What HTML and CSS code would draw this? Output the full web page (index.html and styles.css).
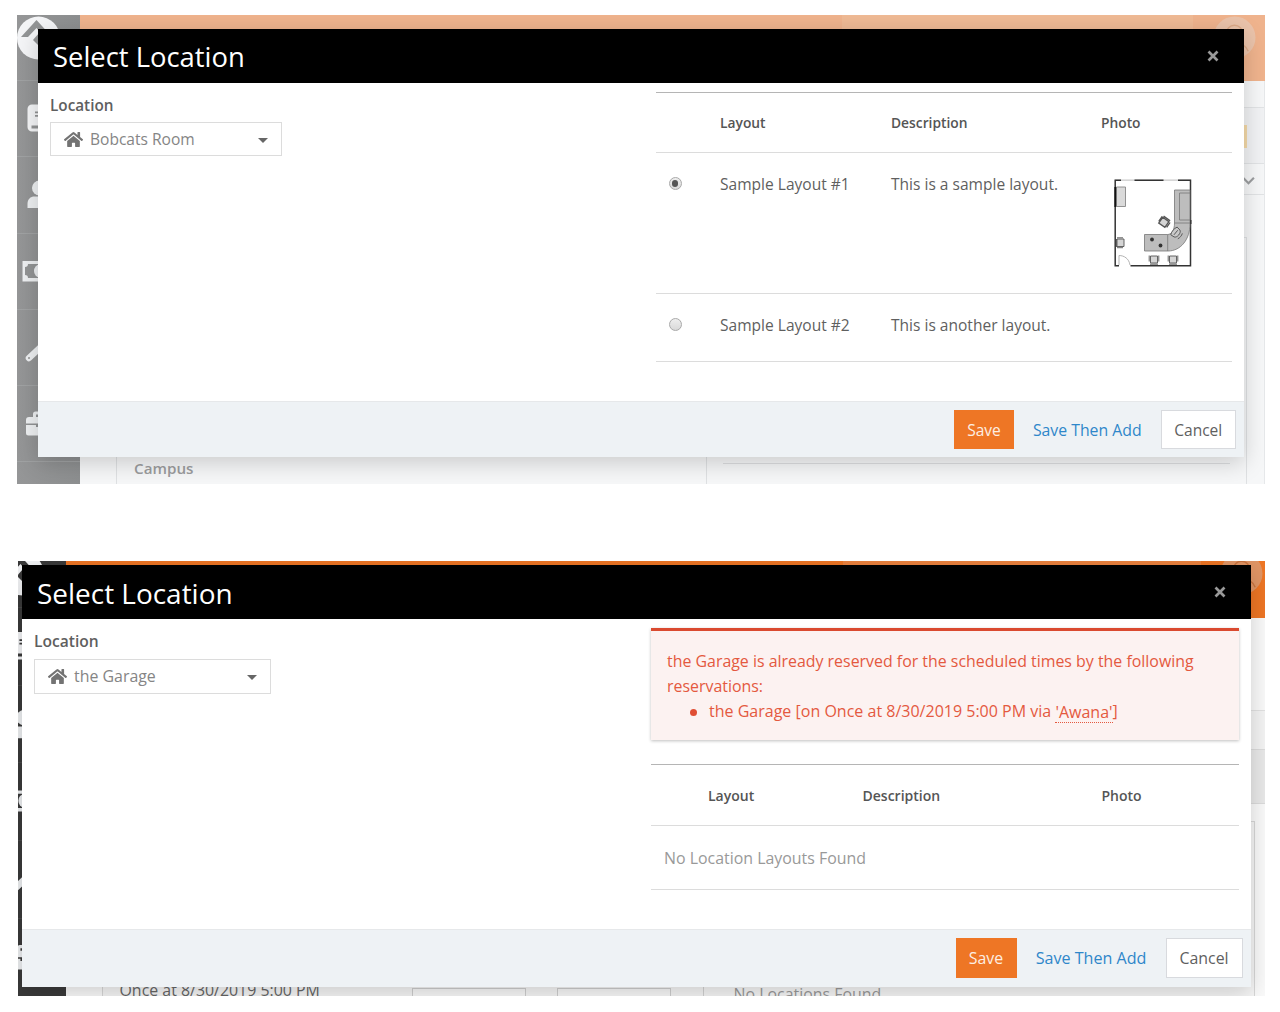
FILE: index.html
```html
<!DOCTYPE html>
<html lang="en">
<head>
<meta charset="utf-8">
<title>Select Location</title>
<link rel="stylesheet" href="styles.css">
</head>
<body>
<svg class="defs" aria-hidden="true">
  <symbol id="i-logo" viewBox="0 0 44 66"><circle cx="21.5" cy="23" r="21.5" fill="#f4f5f7"/><path d="M4 22 19.500 5 35 22h-8l-7.500-9-8.500 9z" class="cut"/><path d="M22 18 16 25l8 8h6z" class="cut"/></symbol>
  <symbol id="i-book" viewBox="0 0 44 76"><path fill="#f4f5f7" d="M15 23.500h20v27H15a4.500 4.500 0 0 1-4.500-4.500V28a4.500 4.500 0 0 1 4.500-4.500z"/><path class="cut" d="M18 30.500h13v1.800H18zM18 34h13v1.800H18zM14.500 44.500h18v3h-18z"/></symbol>
  <symbol id="i-user" viewBox="0 0 44 76"><circle cx="22.500" cy="31" r="7.500" fill="#eef0f2"/><path fill="#eef0f2" d="M10.500 51v-4c0-5 3-7.500 7-7.500h10c4 0 7 2.500 7 7.500v4z"/></symbol>
  <symbol id="i-money" viewBox="0 0 44 76"><path fill="#eef0f2" d="M5.500 27h34v20.500h-34z"/><path class="cut" d="M11 30h23c0 2 1 3 3 3v8c-2 0-3 1-3 3H11c0-2-1-3-3-3v-8c2 0 3-1 3-3z"/><ellipse cx="22.500" cy="37" rx="5.500" ry="6.500" fill="#eef0f2"/><path class="cut" d="M21.500 33.500h2v7h-2z"/></symbol>
  <symbol id="i-wrench" viewBox="0 0 44 76"><path d="M12 48 28 33" stroke="#eef0f2" stroke-width="6.500" stroke-linecap="round"/><circle cx="29" cy="31" r="7" fill="#eef0f2"/><circle cx="12" cy="48" r="1" class="cut"/></symbol>
  <symbol id="i-case" viewBox="0 0 44 76"><path fill="#eef0f2" d="M12 31h4v-3a2.500 2.500 0 0 1 2.500-2.500h8a2.500 2.500 0 0 1 2.500 2.500v3h4a3 3 0 0 1 3 3v13a2.500 2.500 0 0 1-2.500 2.500h-22A2.500 2.500 0 0 1 9 47V34a3 3 0 0 1 3-3z"/><path class="cut" d="M9 37.500h27v1.500H26v2h-7v-2H9zM19 28.500h7V31h-7z"/></symbol>
  <symbol id="i-home" viewBox="0 0 576 512"><path d="M280 149 96 300v164a16 16 0 0 0 16 16l112-.3a16 16 0 0 0 16-16V368a16 16 0 0 1 16-16h64a16 16 0 0 1 16 16v96a16 16 0 0 0 16 16l112 .3a16 16 0 0 0 16-16V300L296 149a12 12 0 0 0-16 0zM572 251l-84-69V44a12 12 0 0 0-12-12h-56a12 12 0 0 0-12 12v73l-90-74a48 48 0 0 0-61 0L4 251a12 12 0 0 0-1 17l25 31a12 12 0 0 0 17 2L280 107a12 12 0 0 1 16 0l235 194a12 12 0 0 0 17-2l25-31a12 12 0 0 0-1-17z"/></symbol>
  <symbol id="i-avatar" viewBox="0 0 44 44"><circle cx="22" cy="22" r="21.500" class="av-bg"/><circle cx="22" cy="18" r="8.500" class="av-line"/><path d="M8 38c1-8 8-10 14-10s12 2 14 8" class="av-line"/></symbol>
</svg>

<section class="scene scene-a">
  <div class="backdrop">
    <nav class="side">
      <div class="side-logo"><svg><use href="#i-logo"/></svg></div>
      <div class="side-item"><svg><use href="#i-book"/></svg></div>
      <div class="side-item"><svg><use href="#i-user"/></svg></div>
      <div class="side-item"><svg><use href="#i-money"/></svg></div>
      <div class="side-item"><svg><use href="#i-wrench"/></svg></div>
      <div class="side-item"><svg><use href="#i-case"/></svg></div>
      <div class="side-item"></div>
    </nav>
    <div class="page">
      <div class="topbar"><div class="search"></div><svg class="avatar"><use href="#i-avatar"/></svg></div>
      <div class="band band-1"></div>
      <div class="band band-2"><i class="tag"></i></div>
      <div class="band band-3"><svg class="chev" viewBox="0 0 12 8"><path d="M1 1.500 6 6.500l5-5"/></svg></div>
      <div class="form">
        <div class="form-left"><span>Campus</span></div>
        <div class="form-right"><div class="rule"></div></div>
      </div>
    </div>
  </div>
  <div class="modal">
    <header class="m-head"><h1>Select Location</h1><svg class="close" viewBox="0 0 12 12"><path d="M1.500 1.500l9 9M10.500 1.500l-9 9"/></svg></header>
    <div class="m-body">
      <div class="left">
        <label>Location</label>
        <div class="picker"><svg class="home"><use href="#i-home"/></svg><span>Bobcats Room</span><i class="caret"></i></div>
      </div>
      <div class="right">
        <div class="grid">
          <div class="row head"><span></span><span>Layout</span><span>Description</span><span>Photo</span></div>
          <div class="row r1"><span><i class="radio on"></i></span><span>Sample Layout #1</span><span>This is a sample layout.</span><span>
            <svg class="plan" viewBox="0 0 78 88">
              <path fill="none" stroke="#c9c9c9" stroke-width="1.200" d="M1 1.200h76"/>
              <path fill="none" stroke="#333" stroke-width="1.500" d="M7 1.200H1.200v85.500H5M20.500 1.200h29M64 1.200h12.500v85.500H16.500"/>
              <path fill="#dadada" stroke="#888" stroke-width=".9" d="M2.500 8h9v19.500h-9z"/>
              <path stroke="#111" stroke-width="1.800" d="M1.300 8v20M76.500 41v4"/>
              <path fill="#bdbdbd" stroke="#777" stroke-width=".8" d="M60.500 11h15.500v34c0 15-9 27-22 27H30.500V55.500h23c4 0 7-4 7-11.500z"/>
              <path fill="none" stroke="#777" stroke-width=".8" d="M60.500 44H76M53.700 55.500V72M76 14H65.500v27H76"/>
              <circle cx="38" cy="60.500" r="1.900" fill="#333"/><circle cx="46.500" cy="66.500" r="1.900" fill="#333"/>
              <g fill="#d5d5d5" stroke="#555" stroke-width=".9">
                <path d="M3 60h7v7.500H3zM3 58.800h6M3 68.700h6M2.500 60v8"/>
                <path d="M36.500 77h7v7h-7zM35.200 76.500v6M44.800 76.500v6M36 85.200h8"/>
                <path d="M55.500 77h7v7h-7zM54.200 76.500v6M63.800 76.500v6M55 85.200h8"/>
                <g transform="rotate(35 50 43.500)"><path d="M46 40h7.500v7H46zM45 39.500v6M55 40v6M46 38.500h8" stroke-width="1.300"/></g>
                <g transform="rotate(-50 63 54.500)"><path fill="#c9c9c9" d="M58 50.500c3-1.500 7-1.500 10 0l-.5 4c-1 3-8 3-9 0zM60 53h6M59.500 58.500c2 1 5 1 7 0"/></g>
              </g>
              <path fill="none" stroke="#aaa" stroke-width=".9" d="M5 86V76.500c5 0 10 3 11 9.500"/>
            </svg></span></div>
          <div class="row r2"><span><i class="radio"></i></span><span>Sample Layout #2</span><span>This is another layout.</span><span></span></div>
        </div>
      </div>
    </div>
    <footer class="m-foot"><span class="btn save">Save</span><span class="btn link">Save Then Add</span><span class="btn cancel">Cancel</span></footer>
  </div>
</section>

<section class="scene scene-b">
  <div class="backdrop">
    <nav class="side">
      <div class="side-logo"><svg><use href="#i-logo"/></svg></div>
      <div class="side-item"><svg><use href="#i-book"/></svg></div>
      <div class="side-item"><svg><use href="#i-user"/></svg></div>
      <div class="side-item"><svg><use href="#i-money"/></svg></div>
      <div class="side-item"><svg><use href="#i-wrench"/></svg></div>
      <div class="side-item"><svg><use href="#i-case"/></svg></div>
    </nav>
    <div class="page">
      <div class="topbar"><div class="search"></div><svg class="avatar"><use href="#i-avatar"/></svg></div>
      <div class="band band-1"></div>
      <div class="band band-2"></div>
      <div class="band band-3"></div>
      <div class="form">
        <div class="form-left"><span class="once">Once at 8/30/2019 5:00 PM</span><i class="field"></i><i class="field"></i></div>
        <div class="form-right"><span class="none">No Locations Found</span></div>
      </div>
    </div>
  </div>
  <div class="modal">
    <header class="m-head"><h1>Select Location</h1><svg class="close" viewBox="0 0 12 12"><path d="M1.500 1.500l9 9M10.500 1.500l-9 9"/></svg></header>
    <div class="m-body">
      <div class="left">
        <label>Location</label>
        <div class="picker"><svg class="home"><use href="#i-home"/></svg><span>the Garage</span><i class="caret"></i></div>
      </div>
      <div class="right">
        <div class="alert">
          <p>the Garage is already reserved for the scheduled times by the following<br>reservations:</p>
          <ul><li>the Garage [on Once at 8/30/2019 5:00 PM via <a>'Awana'</a>]</li></ul>
        </div>
        <div class="grid">
          <div class="row head"><span></span><span>Layout</span><span>Description</span><span>Photo</span></div>
          <div class="row empty"><span>No Location Layouts Found</span></div>
        </div>
      </div>
    </div>
    <footer class="m-foot"><span class="btn save">Save</span><span class="btn link">Save Then Add</span><span class="btn cancel">Cancel</span></footer>
  </div>
</section>
</body>
</html>
```
FILE: styles.css
```css
* { box-sizing: border-box; }
body {
  margin: 0;
  width: 1280px;
  height: 1012px;
  overflow: hidden;
  background: #fff;
  color: #5f5f5f;
  font-family: "Open Sans", "Noto Sans", sans-serif;
  font-size: 15.550px;
  line-height: 24px;
  display: flex;
  flex-direction: column;
}
h1, p, ul { margin: 0; padding: 0; font-weight: 400; }
svg { display: block; flex: none; }
i { display: block; flex: none; }
.defs { position: absolute; width: 0; height: 0; }

.scene { position: relative; overflow: hidden; flex: none; white-space: nowrap; }
.scene-a { margin: 15px 0 0 17px; width: 1248px; height: 469px; --cut: #929495; }
.scene-b { margin: 76.500px 0 0 18px; width: 1247px; height: 435px; font-size: 15.920px; --cut: #3a3a3a; }
.cut { fill: var(--cut); }

/* Page behind the dialog */
.backdrop { display: flex; height: 100%; }
.side { flex: none; background: var(--cut); overflow: hidden; }
.scene-a .side { width: 63px; background: linear-gradient(90deg, #959697, #8d8f90); }
.scene-b .side { width: 47.500px; }
.side svg { width: 44px; height: 76px; }
.side-logo svg { height: 66px; }
.scene-a .side-logo { height: 65px; }
.scene-a .side-item { height: 76.300px; border-top: 1px solid #a0a2a3; }
.scene-b .side-logo { height: 56px; }
.scene-b .side-logo svg { margin-top: -9.500px; }
.scene-b .side-item { height: 77.700px; border-top: 1px solid #484848; }
.scene-b .side svg { margin-left: -17.500px; }
.scene-b .side-item svg { height: 77.700px; width: 45px; }

.page { flex: 1; display: flex; flex-direction: column; min-width: 0; }
.topbar { display: flex; justify-content: flex-end; flex: none; }
.scene-a .topbar { height: 66px; background: #efb38d; }
.scene-b .topbar { height: 57px; background: #ee7625; }
.search { height: 100%; }
.scene-a .search { width: 351px; background: #efba95; margin-right: 20px; }
.scene-b .search { width: 358px; background: #ec833f; margin-right: 19px; }
.avatar { width: 43px; height: 43px; }
.scene-a .avatar { margin: 1px 9px 0 0; --av: #eac3aa; --avl: #dba987; }
.scene-b .avatar { margin: -9px 2px 0 0; --av: #e09565; --avl: #c9743f; }
.av-bg { fill: var(--av); }
.av-line { fill: none; stroke: var(--avl); stroke-width: 1.500; }

.band { flex: none; display: flex; justify-content: flex-end; }
.scene-a .page { background: #f6f7f8; border-right: 1px solid #e6e8ea; }
.scene-a .topbar { margin-right: -1px; }
.scene-a .band-1 { height: 26px; }
.scene-a .band-2 { height: 57px; background: #f1f2f4; border: solid #e1e3e5; border-width: 1px 0; padding: 17px 17px 0 0; }
.scene-a .band-3 { height: 31px; border-bottom: 1px solid #e1e3e5; padding: 12px 9px 0 0; }
.tag { width: 14px; height: 23px; background: #f4d9a8; }
.chev { width: 13px; height: 9px; fill: none; stroke: #9c9ea0; stroke-width: 2; }
.form { display: flex; flex: 1; }
.scene-a .form { margin: 42px 17px 0 36px; border: 1px solid #dfe1e3; border-bottom: 0; }
.scene-a .form-left { width: 590px; border-right: 1px solid #dfe1e3; display: flex; align-items: flex-end; padding: 0 0 4px 17px; font-weight: 600; color: #9b9c9e; font-size: 15.200px; }
.scene-a .form-right { flex: 1; display: flex; align-items: flex-end; padding: 0 16px 20px; }
.rule { flex: 1; height: 1px; background: #dcdee0; }

.scene-b .page { background: #fafafa; }
.scene-b .band-1 { height: 92px; }
.scene-b .band-2 { height: 39px; background: #f4f4f4; border-top: 1px solid #e2e2e2; }
.scene-b .band-3 { height: 55px; background: #e9e9e9; border: solid #dcdcdc; border-width: 1px 0; }
.scene-b .form { margin: 17px 10.500px 0 36px; border: 1px solid #d8d8d8; border-bottom: 0; background: #f6f6f6; }
.scene-b .form-left { width: 601px; border-right: 1px solid #d2d2d2; display: flex; align-items: flex-end; padding-left: 17px; color: #666; }
.once { width: 292px; height: 18px; }
.none { height: 14px; color: #999; }
.field { width: 114px; height: 8px; border: 1px solid #cfcfcf; border-bottom: 0; margin-right: 31px; background: #f9f9f9; }
.scene-b .form-right { display: flex; align-items: flex-end; padding-left: 30px; }

/* Dialog */
.modal { position: absolute; display: flex; flex-direction: column; background: #fff; box-shadow: 0 6px 22px rgba(0, 0, 0, .18); }
.scene-a .modal { left: 21px; top: 14px; width: 1206px; height: 428px; }
.scene-b .modal { left: 4px; top: 4.500px; width: 1228.500px; height: 421.500px; }
.m-head { height: 54px; flex: none; background: #000; color: #fff; display: flex; align-items: center; justify-content: space-between; padding: 0 25px 0 15px; }
.m-head h1 { font-size: 27.400px; line-height: 54px; padding-top: 2px; }
.scene-b h1 { font-size: 27.950px; }
.close { width: 12px; height: 12px; stroke: #999; stroke-width: 2.700; fill: none; }
.m-body { flex: 1; display: flex; justify-content: space-between; }
.left { padding: 9.500px 0 0 12px; }
.left label { display: block; font-weight: 600; font-size: 15.300px; }
.scene-b .left label { font-size: 15.600px; }
.picker { display: flex; align-items: center; margin-top: 5.500px; width: 232px; height: 34px; border: 1px solid #dcdcdc; padding: 0 13px; color: #858585; }
.scene-b .picker { width: 237px; height: 35px; margin-top: 6px; }
.home { width: 19px; height: 17px; fill: #737373; margin-right: 7px; }
.caret { margin: 3px 0 0 auto; border: 5px solid transparent; border-top: 5.500px solid #666; border-bottom: 0; }
.scene-a .right { padding: 9px 12px 0 0; }
.scene-b .right { padding: 9px 12px 0 0; }
.row { display: grid; border-bottom: 1px solid #dcdcdc; }
.scene-a .row { grid-template-columns: 64px 171px 210px 131px; }
.scene-b .row { grid-template-columns: 57px 154.500px 239px 136.500px; }
.row.head { border-top: 1px solid #b5b5b5; font-weight: 600; font-size: 13.800px; height: 61px; padding-top: 1px; align-items: center; color: #555; }
.scene-b .row.head { height: 62px; font-size: 14px; padding-top: 2px; }
.r1 { height: 141px; padding-top: 19px; }
.r2 { height: 68px; padding-top: 19px; }
.radio { width: 13px; height: 13px; border-radius: 50%; border: 1px solid #a9a9a9; background: linear-gradient(#eee, #d9d9d9); margin: 5px 0 0 12.500px; display: flex; align-items: center; justify-content: center; }
.radio.on::after { content: ""; width: 6.500px; height: 6.500px; border-radius: 50%; background: #555; }
.plan { width: 78px; height: 88px; margin: 7px 0 0 13px; }
.scene-b .row.empty { display: block; height: 64px; padding: 20px 0 0 13px; color: #999; }
.alert { width: 587.500px; height: 112px; border-top: 3px solid #da4a30; background: #fcf2f1; box-shadow: 0 1px 3px rgba(0, 0, 0, .25); color: #e4593f; padding: 18px 0 0 16px; line-height: 25.200px; margin-bottom: 24px; }
.alert ul { list-style: none; }
.alert li { display: flex; align-items: center; white-space: pre; font-size: 16.020px; }
.alert li::before { content: ""; width: 7px; height: 7px; border-radius: 50%; background: #e04e34; margin: 0 12px 0 23px; }
.alert a { line-height: 20px; border-bottom: 1px dotted #e4593f; margin-top: 1px; }
.m-foot { height: 56px; flex: none; background: #eef2f5; border-top: 1px solid #e6e8ea; display: flex; align-items: center; padding-right: 8px; justify-content: flex-end; }
.scene-b .m-foot { height: 58px; }
.btn { height: 39px; display: flex; align-items: center; justify-content: center; }
.scene-b .btn { height: 40px; }
.save { width: 60px; background: #ee7625; color: #fdeee2; }
.link { width: 146.500px; color: #2e87ca; font-size: 15.800px; }
.cancel { width: 75.500px; background: #fff; border: 1px solid #d8dade; }
.scene-b .save { width: 61px; }
.scene-b .link { width: 149px; font-size: 16.100px; }
.scene-b .cancel { width: 77px; }
```
